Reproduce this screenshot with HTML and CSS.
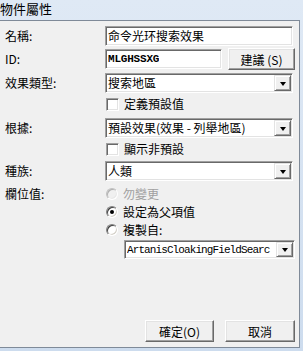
FILE: index.html
```html
<!DOCTYPE html>
<html>
<head>
<meta charset="utf-8">
<link rel="stylesheet" href="styles.css">
</head>
<body>
<div class="window">
  <div class="titlebar">物件屬性</div>
  <div class="dialog">
    <div class="row r-name">
      <div class="label">名稱:</div>
      <div class="field edit wide"><span class="txt">命令光环搜索效果</span></div>
    </div>
    <div class="row r-id">
      <div class="label">ID:</div>
      <div class="field edit idbox"><span class="mono bold">MLGHSSXG</span></div>
      <div class="btn suggest">建議 (S)</div>
    </div>
    <div class="row r-sel">
      <div class="label">效果類型:</div>
      <div class="field edit wide combo"><span class="txt">搜索地區</span><span class="arrow"><i></i></span></div>
    </div>
    <div class="row r-chk">
      <div class="label"></div>
      <span class="check"></span><span class="ctext">定義預設值</span>
    </div>
    <div class="row r-sel">
      <div class="label">根據:</div>
      <div class="field edit wide combo"><span class="txt">預設效果(效果 - 列舉地區)</span><span class="arrow"><i></i></span></div>
    </div>
    <div class="row r-chk">
      <div class="label"></div>
      <span class="check"></span><span class="ctext">顯示非預設</span>
    </div>
    <div class="row r-sel r-race">
      <div class="label">種族:</div>
      <div class="field edit wide combo"><span class="txt">人類</span><span class="arrow"><i></i></span></div>
    </div>
    <div class="row r-val">
      <div class="label vlabel">欄位值:</div>
      <div class="radios">
        <div class="rrow disabled"><span class="radio"></span><span class="ctext">勿變更</span></div>
        <div class="rrow"><span class="radio on"></span><span class="ctext">設定為父項值</span></div>
        <div class="rrow"><span class="radio"></span><span class="ctext">複製自:</span></div>
        <div class="field edit copy combo"><span class="mono">ArtanisCloakingFieldSearc</span><span class="arrow"><i></i></span></div>
      </div>
    </div>
    <div class="buttons">
      <div class="btn okbtn">確定(O)</div>
      <div class="btn cancel">取消</div>
    </div>
  </div>
</div>
</body>
</html>
```

FILE: styles.css
```css
html, body {
  margin: 0;
  padding: 0;
}
body {
  width: 303px;
  height: 351px;
  overflow: hidden;
  font-family: "Noto Sans CJK TC", "Liberation Sans", sans-serif;
  font-size: 12px;
  color: #000;
}
.window {
  width: 303px;
  height: 351px;
  display: flex;
  flex-direction: column;
  background: linear-gradient(#dfe9f5, #cddcee);
}
.titlebar {
  height: 20px;
  line-height: 18px;
  font-size: 13px;
  color: #000;
}
.dialog {
  width: 299px;
  height: 321px;
  background: #f0f0f0;
  border-top: 1px solid #7f8a98;
  border-right: 1px solid #7f8a98;
  border-bottom: 1px solid #7f8a98;
  display: flex;
  flex-direction: column;
  padding-top: 5px;
  box-sizing: content-box;
}
.row {
  display: flex;
  align-items: center;
}
.label {
  width: 100px;
  padding-left: 5px;
  flex: none;
  line-height: 18px;
}
.field {
  box-sizing: border-box;
  height: 20px;
  display: flex;
  align-items: center;
  background: #fff;
}
.edit {
  border: 1px solid;
  border-color: #a0a0a0 #ffffff #ffffff #a0a0a0;
  box-shadow: inset 1px 1px 0 #696969, inset -1px -1px 0 #e3e3e3;
  padding-left: 2px;
}
.wide { width: 188px; }
.r-name { height: 20px; }
.r-id { height: 22px; margin-top: 2px; }
.idbox { width: 117px; }
.btn {
  box-sizing: border-box;
  height: 22px;
  display: flex;
  align-items: center;
  justify-content: center;
  background: #f0f0f0;
  border: 1px solid;
  border-color: #ffffff #696969 #696969 #ffffff;
  box-shadow: inset -1px -1px 0 #a0a0a0, inset 1px 1px 0 #e3e3e3;
  font-size: 12px;
  white-space: pre;
}
.suggest { width: 67px; margin-left: 6px; }
.r-sel { height: 20px; margin-top: 3px; }
.r-race { margin-top: 1px; }
.r-chk { height: 22px; }
.txt {
  white-space: nowrap;
  line-height: 16px;
}
.mono {
  font-family: "Liberation Mono", monospace;
  font-size: 11px;
  letter-spacing: -0.9px;
  white-space: nowrap;
  overflow: hidden;
}
.bold { font-weight: bold; letter-spacing: -0.2px; }
.combo .txt, .combo .mono { flex: 1; overflow: hidden; }
.arrow {
  flex: none;
  box-sizing: border-box;
  width: 17px;
  height: 16px;
  margin-right: 1px;
  background: #f0f0f0;
  border: 1px solid;
  border-color: #e3e3e3 #696969 #696969 #e3e3e3;
  box-shadow: inset 1px 1px 0 #ffffff, inset -1px -1px 0 #a0a0a0;
  display: flex;
  align-items: center;
  justify-content: center;
}
.arrow i {
  width: 0;
  height: 0;
  border-left: 3.5px solid transparent;
  border-right: 3.5px solid transparent;
  border-top: 4px solid #000;
  margin-top: 1px;
}
.check {
  box-sizing: border-box;
  width: 13px;
  height: 13px;
  margin-left: 1px;
  background: #fff;
  border: 1px solid;
  border-color: #a0a0a0 #ffffff #ffffff #a0a0a0;
  box-shadow: inset 1px 1px 0 #696969, inset -1px -1px 0 #e3e3e3;
  flex: none;
}
.ctext {
  margin-left: 5px;
  white-space: nowrap;
  line-height: 18px;
}
.r-val {
  align-items: flex-start;
  margin-top: 4px;
}
.radios {
  display: flex;
  flex-direction: column;
}
.rrow {
  height: 18px;
  display: flex;
  align-items: center;
}
.radio {
  box-sizing: border-box;
  width: 12px;
  height: 12px;
  margin-left: 1px;
  border-radius: 50%;
  background: #fff;
  border: 1px solid;
  border-color: #808080 #ffffff #ffffff #808080;
  box-shadow: inset 1px 1px 0 #404040, inset -1px -1px 0 #d4d0c8;
  display: flex;
  align-items: center;
  justify-content: center;
  flex: none;
}
.radio.on::after {
  content: "";
  width: 4px;
  height: 4px;
  border-radius: 50%;
  background: #000;
}
.disabled .radio {
  background: #f0f0f0;
  border-color: #c0c0c0 #ffffff #ffffff #c0c0c0;
  box-shadow: inset 1px 1px 0 #b0b0b0, inset -1px -1px 0 #e8e8e8;
}
.disabled .ctext { color: #a0a0a0; }
.copy {
  width: 171px;
  height: 19px;
  margin-left: 19px;
  margin-top: 1px;
}
.copy .arrow { height: 15px; }
.buttons {
  margin-top: auto;
  display: flex;
  justify-content: flex-end;
  gap: 11px;
  padding-right: 4px;
  padding-bottom: 5px;
}
.okbtn { width: 69px; }
.cancel { width: 70px; }
```
